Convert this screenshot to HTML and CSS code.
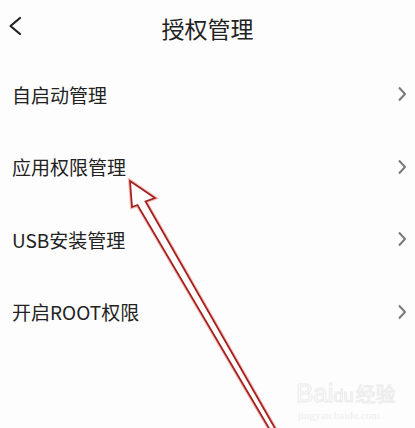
FILE: index.html
```html
<!DOCTYPE html>
<html lang="zh">
<head>
<meta charset="utf-8">
<link rel="stylesheet" href="styles.css">
</head>
<body>
<div class="page">
  <header class="header">
    <svg class="back" width="16" height="20" viewBox="0 0 16 20"><polyline points="13,2 3.5,10 13,18" fill="none" stroke="#222" stroke-width="2.2" stroke-linecap="round" stroke-linejoin="round"/></svg>
    <h1 class="title">授权管理</h1>
  </header>
  <ul class="list">
    <li class="row"><span class="label">自启动管理</span><svg class="chev" width="10" height="16" viewBox="0 0 10 16"><polyline points="2,1.5 8,8 2,14.5" fill="none" stroke="#7a7a7a" stroke-width="2" stroke-linejoin="round"/></svg></li>
    <li class="row"><span class="label">应用权限管理</span><svg class="chev" width="10" height="16" viewBox="0 0 10 16"><polyline points="2,1.5 8,8 2,14.5" fill="none" stroke="#7a7a7a" stroke-width="2" stroke-linejoin="round"/></svg></li>
    <li class="row"><span class="label">USB安装管理</span><svg class="chev" width="10" height="16" viewBox="0 0 10 16"><polyline points="2,1.5 8,8 2,14.5" fill="none" stroke="#7a7a7a" stroke-width="2" stroke-linejoin="round"/></svg></li>
    <li class="row"><span class="label">开启ROOT权限</span><svg class="chev" width="10" height="16" viewBox="0 0 10 16"><polyline points="2,1.5 8,8 2,14.5" fill="none" stroke="#7a7a7a" stroke-width="2" stroke-linejoin="round"/></svg></li>
  </ul>
  <svg class="arrow" width="415" height="428" viewBox="0 0 415 428">
    <polygon points="130,181 155,198 145.5,201.5 276,430 270,430 137.5,205 132,207" fill="#fff" stroke="#ee8a86" stroke-width="4" stroke-linejoin="miter" opacity="0.5"/>
    <polygon points="130,181 155,198 145.5,201.5 276,430 270,430 137.5,205 132,207" fill="#fff" stroke="#a3221e" stroke-width="1.8" stroke-linejoin="miter"/>
  </svg>
  <div class="watermark">
    <div class="wm-top"><span class="wm-bai">Bai</span><span class="wm-du">du</span><span class="wm-jy">经验</span></div>
    <div class="wm-url">jingyan.baidu.com</div>
  </div>
</div>
</body>
</html>
```
FILE: styles.css
```css
html, body {
  margin: 0;
  padding: 0;
  background: #fdfdfd;
}
.page {
  position: relative;
  width: 415px;
  height: 428px;
  overflow: hidden;
  font-family: "Noto Sans CJK SC", "Noto Sans", sans-serif;
  color: #222;
}
.header {
  height: 58px;
  display: flex;
  align-items: center;
  justify-content: center;
  position: relative;
}
.back {
  position: absolute;
  left: 7px;
  top: 16px;
}
.title {
  margin: 0;
  font-size: 23px;
  font-weight: 400;
  line-height: 1;
  margin-top: -2px;
}
.list {
  list-style: none;
  margin: 0;
  padding: 0;
}
.row {
  height: 72.5px;
  display: flex;
  align-items: center;
  justify-content: space-between;
  padding: 0 8px 0 12px;
}
.label {
  font-size: 19px;
  line-height: 1;
}
.chev {
  display: block;
}
.arrow {
  position: absolute;
  left: 0;
  top: 0;
  pointer-events: none;
}
.watermark {
  position: absolute;
  left: 296px;
  top: 380px;
  font-family: "Liberation Sans", sans-serif;
}
.wm-top {
  display: flex;
  align-items: baseline;
  font-size: 26px;
  line-height: 1;
}
.wm-bai {
  color: transparent;
  -webkit-text-stroke: 1px #ececec;
}
.wm-du {
  color: transparent;
  -webkit-text-stroke: 1px #ececec;
  font-size: 18px;
}
.wm-jy {
  font-family: "Noto Sans CJK SC", sans-serif;
  font-size: 20px;
  color: transparent;
  -webkit-text-stroke: 1px #ececec;
  margin-left: 2px;
}
.wm-url {
  font-family: "Liberation Serif", serif;
  font-size: 11px;
  color: #ededed;
  margin-top: 3px;
  margin-left: 2px;
}
```
